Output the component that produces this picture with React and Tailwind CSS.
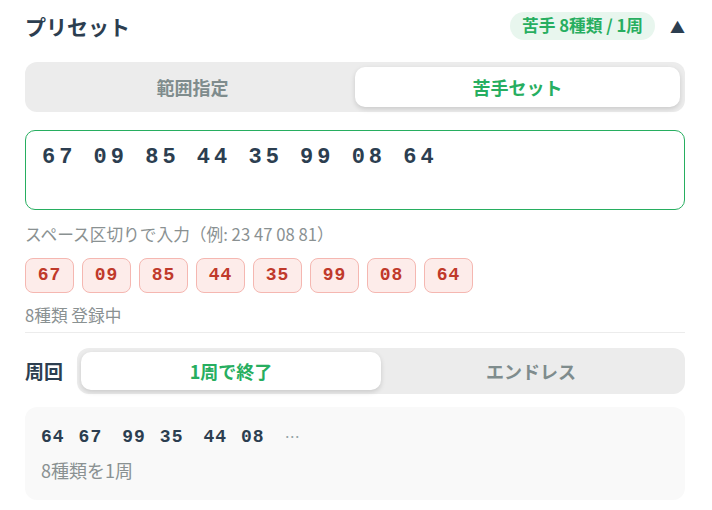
import React from "react";

const nums = ["67", "09", "85", "44", "35", "99", "08", "64"];
const groups = [["64", "67"], ["99", "35"], ["44", "08"]];

const mono = "font-['Liberation_Mono',monospace] font-bold";

export default function App() {
  return (
    <div className="w-[712px] h-[510px] bg-white pl-[25px] pr-[27px] pt-[12px] font-['Noto_Sans_CJK_JP','Noto_Sans',sans-serif] overflow-hidden">
      {/* Header */}
      <div className="flex items-center justify-between h-7">
        <h2 className="text-[21px] font-bold text-[#2c3e50] leading-7">プリセット</h2>
        <div className="flex items-center gap-[15px]">
          <span className="h-7 px-3 rounded-full bg-[#e8f6ee] text-[#27ae60] text-[16.7px] font-bold flex items-center">
            苦手 8種類 / 1周
          </span>
          <span className="text-[#2c3e50] text-[15px] leading-none">▲</span>
        </div>
      </div>

      {/* Mode toggle */}
      <div className="mt-[22px] h-[50px] p-[5px] bg-[#ececec] rounded-xl grid grid-cols-2">
        <button className="rounded-[10px] text-[18px] font-bold text-[#7f8c8d]">範囲指定</button>
        <button className="rounded-[10px] bg-white shadow-[0_2px_5px_rgba(0,0,0,0.15)] text-[18px] font-bold text-[#27ae60]">
          苦手セット
        </button>
      </div>

      {/* Input */}
      <textarea
        readOnly
        value={nums.join(" ")}
        className={`mt-[18px] block w-full h-20 resize-none rounded-[10px] border border-[#27ae60] px-4 pt-[10px] text-[22px] tracking-[4px] text-[#2c3e50] outline-none ${mono}`}
      />
      <p className="mt-[14px] text-[16.7px] leading-5 text-[#8a9192]">スペース区切りで入力（例: 23 47 08 81）</p>

      <div className="mt-[14px] flex gap-2">
        {nums.map((n) => (
          <span
            key={n}
            className={`w-[49px] h-[35px] rounded-lg bg-[#fdecea] border border-[#f5b7b1] text-[#c0392b] text-[18px] tracking-[1px] flex items-center justify-center ${mono}`}
          >
            {n}
          </span>
        ))}
      </div>
      <p className="mt-3 text-[16.7px] leading-5 text-[#8a9192]">8種類 登録中</p>

      <div className="mt-[7px] border-t border-[#ececec]" />

      {/* Loop */}
      <div className="mt-[15px] flex items-center gap-[14px]">
        <span className="text-[19px] font-bold text-[#2c3e50]">周回</span>
        <div className="flex-1 h-[46px] p-1 bg-[#ececec] rounded-xl grid grid-cols-2">
          <button className="rounded-[10px] bg-white shadow-[0_2px_5px_rgba(0,0,0,0.15)] text-[18px] font-bold text-[#27ae60]">
            1周で終了
          </button>
          <button className="rounded-[10px] text-[18px] font-bold text-[#7f8c8d]">エンドレス</button>
        </div>
      </div>

      {/* Preview */}
      <div className="mt-[13px] bg-[#f9f9f9] rounded-xl px-4 pt-[18px] pb-[18px]">
        <div className="flex items-center gap-[20px] h-6">
          {groups.map((g, i) => (
            <div key={i} className="flex gap-[14px]">
              {g.map((n) => (
                <span key={n} className={`text-[18px] tracking-[1px] text-[#2c3e50] ${mono}`}>
                  {n}
                </span>
              ))}
            </div>
          ))}
          <span className="text-[15px] text-[#95a5a6]">…</span>
        </div>
        <p className="mt-[9px] text-[18px] leading-6 text-[#8a9192]">8種類を1周</p>
      </div>
    </div>
  );
}
